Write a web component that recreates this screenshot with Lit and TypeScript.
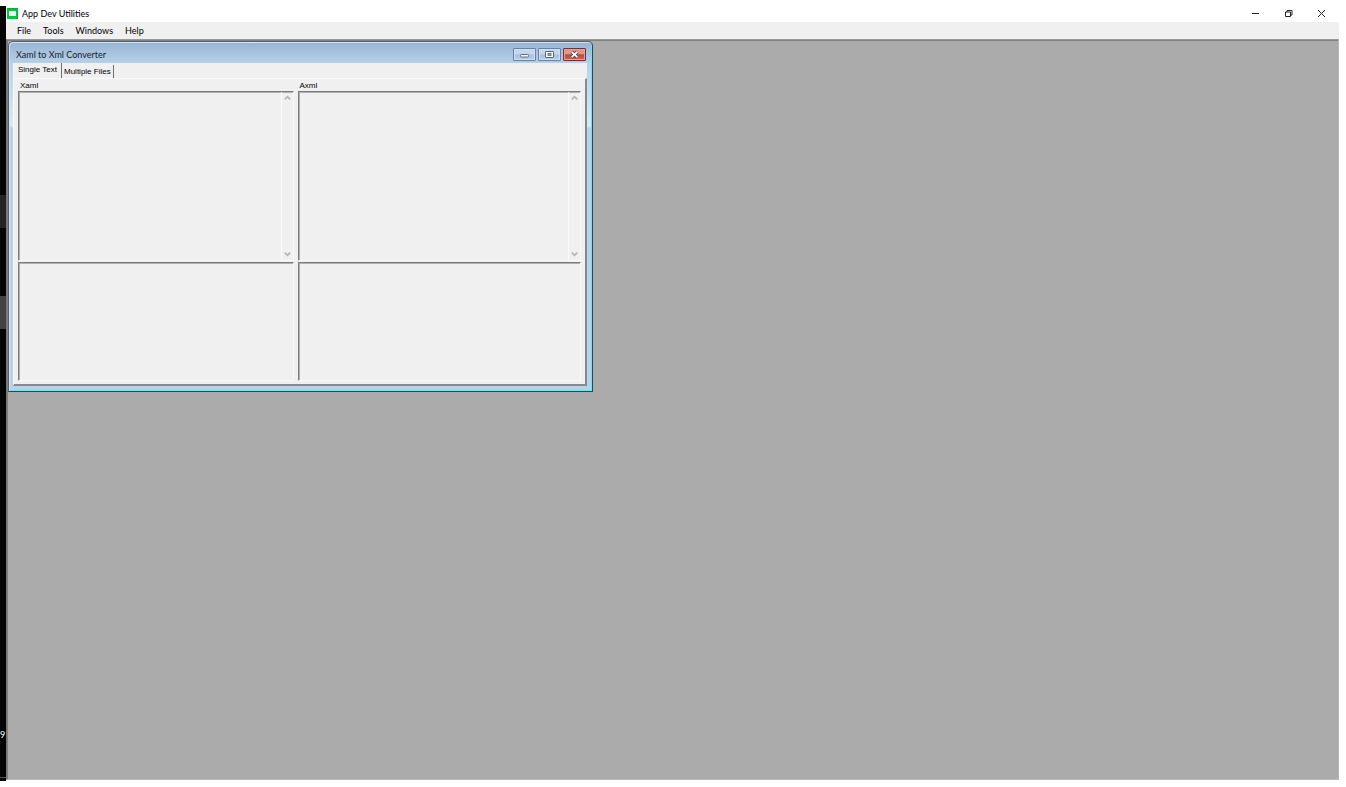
import { LitElement, html, css, svg } from "lit";
import { customElement, state } from "lit/decorators.js";

const chevronUp = svg`<path d="M0.8 4.4 L3.5 1.6 L6.2 4.4" />`;
const chevronDown = svg`<path d="M0.8 1.6 L3.5 4.4 L6.2 1.6" />`;

@customElement("text-pane")
export class TextPane extends LitElement {
  static properties = {
    label: { type: String },
    scrollbar: { type: Boolean },
  };

  declare label: string;
  declare scrollbar: boolean;

  static styles = css`
    :host {
      display: flex;
      min-width: 0;
      min-height: 0;
      border-top: 1px solid #7c7c7c;
      border-left: 1px solid #7c7c7c;
      border-right: 1px solid #f8f8f8;
      border-bottom: 1px solid #f8f8f8;
      box-sizing: border-box;
      background: #f0f0f0;
      box-shadow: inset 1px 1px 0 #b0b0b0;
    }
    textarea {
      flex: 1;
      min-width: 0;
      box-sizing: border-box;
      border: 0;
      margin: 0;
      padding: 1px 2px;
      resize: none;
      outline: none;
      background: transparent;
      font: 8px/10px "Liberation Sans", Arial, sans-serif;
    }
    .bar {
      display: flex;
      flex-direction: column;
      justify-content: space-between;
      width: 12px;
      box-sizing: border-box;
      border-left: 1px solid #fafafa;
    }
    button {
      display: grid;
      place-items: center;
      height: 12px;
      border: 0;
      padding: 0;
      background: transparent;
    }
    svg {
      width: 7px;
      height: 6px;
      fill: none;
      stroke: #b4b4b4;
      stroke-width: 1.6;
    }
  `;

  render() {
    return html`
      <textarea aria-label=${this.label} spellcheck="false"></textarea>
      ${this.scrollbar
        ? html`<div class="bar">
            <button aria-label="Scroll up"><svg viewBox="0 0 7 6">${chevronUp}</svg></button>
            <button aria-label="Scroll down"><svg viewBox="0 0 7 6">${chevronDown}</svg></button>
          </div>`
        : ""}
    `;
  }
}

@customElement("converter-window")
export class ConverterWindow extends LitElement {
  @state() private tab = 0;

  static styles = css`
    :host {
      display: flex;
      flex-direction: column;
      box-sizing: border-box;
      border: 1px solid #56626c;
      border-right-color: #0b5563;
      border-bottom-color: #0b5563;
      border-radius: 5px 5px 0 0;
      padding: 0 5px 5px 4px;
      background: linear-gradient(#98b4d3, #b9d1ea 22px, #dbe8f5 84px, #b9d1ea 86px);
      box-shadow: inset 1px 1px 0 #d3e1f0, inset -1px -1px 0 #7edcf2;
      font: 9px/12px Lato, "Open Sans", sans-serif;
    }
    .title {
      display: flex;
      align-items: center;
      height: 21px;
      padding: 0 1px 0 3px;
      color: #101c2c;
    }
    .title h2 {
      flex: 1;
      margin: 0;
      padding-top: 4px;
      font: inherit;
      line-height: 12px;
    }
    .controls {
      display: flex;
      gap: 2px;
      padding-top: 4px;
    }
    .controls button {
      display: grid;
      place-items: center;
      width: 23px;
      height: 13px;
      box-sizing: border-box;
      padding: 0;
      border: 1px solid #6681a4;
      border-radius: 1px;
      background: linear-gradient(#c3d8ee 48%, #a6c1de 52%, #b6d0ea);
      box-shadow: inset 0 0 0 1px #cfe0f1;
    }
    .controls .close {
      border-color: #742f36;
      background: linear-gradient(#dd988c 45%, #bd4734 52%, #cf6a54);
      box-shadow: inset 0 0 0 1px #dfa398;
    }
    .controls svg {
      width: 11px;
      height: 9px;
    }
    .client {
      flex: 1;
      display: flex;
      flex-direction: column;
      min-height: 0;
      background: #f0f0f0;
    }
    .tabs {
      display: flex;
      align-items: flex-end;
      height: 15px;
      border-left: 1px solid #fafafa;
      font: 8px/12px "Liberation Sans", Arial, sans-serif;
    }
    .tabs button {
      height: 13px;
      box-sizing: border-box;
      padding: 1px 2px 0;
      border: 0;
      border-right: 1px solid #6f6f6f;
      background: #f0f0f0;
      color: #000;
      font: inherit;
      line-height: 12px;
      white-space: nowrap;
    }
    .tabs button[aria-selected="true"] {
      height: 15px;
      padding: 0 4px 1px;
    }
    .panel {
      flex: 1;
      display: grid;
      grid-template-columns: 276fr 284fr;
      grid-template-rows: 9px 170fr 119fr;
      column-gap: 4px;
      row-gap: 1px;
      min-height: 0;
      box-sizing: border-box;
      padding: 2px 4px 3px 4px;
      border: 1px solid #fafafa;
      border-right: 2px solid #8a8a8a;
      border-bottom: 2px solid #8a8a8a;
    }
    .caption {
      padding-left: 2px;
      color: #000;
      font: 8px/10px "Liberation Sans", Arial, sans-serif;
    }
  `;

  render() {
    return html`
      <header class="title">
        <h2>Xaml to Xml Converter</h2>
        <div class="controls">
          <button aria-label="Minimize">
            <svg viewBox="0 0 11 9"><rect x="1.5" y="4.5" width="8" height="2.5" rx="0.8" fill="#fff" stroke="#5b6c82" /></svg>
          </button>
          <button aria-label="Maximize">
            <svg viewBox="0 0 11 9">
              <rect x="1.5" y="1.5" width="8" height="6" rx="0.6" fill="#fff" stroke="#4f5f74" />
              <rect x="4" y="3.5" width="3" height="2" fill="#9fb6d0" stroke="#4f5f74" stroke-width="0.8" />
            </svg>
          </button>
          <button class="close" aria-label="Close">
            <svg viewBox="0 0 11 9">
              <path d="M2.7 1.8 L8.3 7.2 M8.3 1.8 L2.7 7.2" stroke="#4d4650" stroke-width="3.4" />
              <path d="M2.7 1.8 L8.3 7.2 M8.3 1.8 L2.7 7.2" stroke="#fff" stroke-width="1.8" />
            </svg>
          </button>
        </div>
      </header>
      <div class="client">
        <div class="tabs" role="tablist">
          ${["Single Text", "Multiple Files"].map(
            (name, i) => html`<button
              role="tab"
              aria-selected=${this.tab === i ? "true" : "false"}
              @click=${() => (this.tab = i)}
            >${name}</button>`
          )}
        </div>
        <div class="panel" role="tabpanel">
          <span class="caption">Xaml</span>
          <span class="caption">Axml</span>
          <text-pane label="Xaml" scrollbar></text-pane>
          <text-pane label="Axml" scrollbar></text-pane>
          <text-pane label="Xaml messages"></text-pane>
          <text-pane label="Axml messages"></text-pane>
        </div>
      </div>
    `;
  }
}

@customElement("app-root")
export class AppRoot extends LitElement {
  static styles = css`
    :host {
      display: grid;
      grid-template-columns: 6px 1fr;
      box-sizing: border-box;
      min-height: 100vh;
      padding: 6px 7px 6px 0;
      background: #fff;
      color: #000;
      font: 9px/12px Lato, "Open Sans", sans-serif;
    }
    .behind {
      display: flex;
      flex-direction: column;
      justify-content: flex-end;
      overflow: hidden;
      padding-bottom: 40px;
      background: linear-gradient(
        #050505 189px, #242424 189px 222px, #050505 222px 290px,
        #424242 290px 323px, #050505 323px 771px, #555 771px 772px, #050505 772px
      );
      color: #fff;
    }
    .app {
      display: flex;
      flex-direction: column;
      min-width: 0;
      padding-bottom: 1px;
    }
    .titlebar {
      display: flex;
      align-items: center;
      gap: 4px;
      height: 16px;
      padding-left: 1px;
    }
    .logo {
      width: 11px;
      height: 12px;
    }
    h1 {
      flex: 1;
      margin: 0;
      font: inherit;
    }
    .controls {
      display: flex;
    }
    .controls button {
      display: grid;
      place-items: center;
      width: 33px;
      height: 16px;
      box-sizing: border-box;
      padding: 0 2px 2px 0;
      border: 0;
      background: transparent;
    }
    .controls svg {
      width: 9px;
      height: 9px;
      fill: none;
      stroke: #222;
    }
    nav {
      display: flex;
      height: 17px;
      padding-left: 5px;
      background: #f0f0f0;
    }
    nav button {
      padding: 0 6px;
      border: 0;
      background: transparent;
      color: #000;
      font: inherit;
    }
    .desktop {
      position: relative;
      flex: 1;
      border-top: 1px solid #999;
      border-left: 1px solid #777;
      border-right: 1px solid #b8b8b8;
      border-bottom: 1px solid #b8b8b8;
      background: #ababab;
      box-shadow: inset 1px 1px 0 #808080;
    }
    converter-window {
      position: absolute;
      left: 1px;
      top: 1px;
      width: 585px;
      height: 351px;
    }
  `;

  render() {
    return html`
      <aside class="behind">9</aside>
      <main class="app">
        <header class="titlebar">
          <svg class="logo" viewBox="0 0 11 12">
            <rect width="11" height="11" fill="#08c53f" />
            <path d="M0 0H11V11" fill="none" stroke="#079b32" />
            <rect x="2" y="3" width="7" height="5" rx="0.6" fill="#fff" />
            <path d="M3.5 4.6H7.5V6.5H3.5Z" fill="#e2f8e7" />
          </svg>
          <h1>App Dev Utilities</h1>
          <div class="controls">
            <button aria-label="Minimize"><svg viewBox="0 0 9 9"><path d="M1 4.5H8" /></svg></button>
            <button aria-label="Restore">
              <svg viewBox="0 0 9 9"><path d="M1.5 3H6.5V7.5H1.5Z M3 3V1.5H8V6H6.5" /></svg>
            </button>
            <button aria-label="Close"><svg viewBox="0 0 9 9"><path d="M1 1L8 8M8 1L1 8" /></svg></button>
          </div>
        </header>
        <nav aria-label="Main menu">
          ${["File", "Tools", "Windows", "Help"].map((name) => html`<button>${name}</button>`)}
        </nav>
        <section class="desktop"><converter-window></converter-window></section>
      </main>
    `;
  }
}
